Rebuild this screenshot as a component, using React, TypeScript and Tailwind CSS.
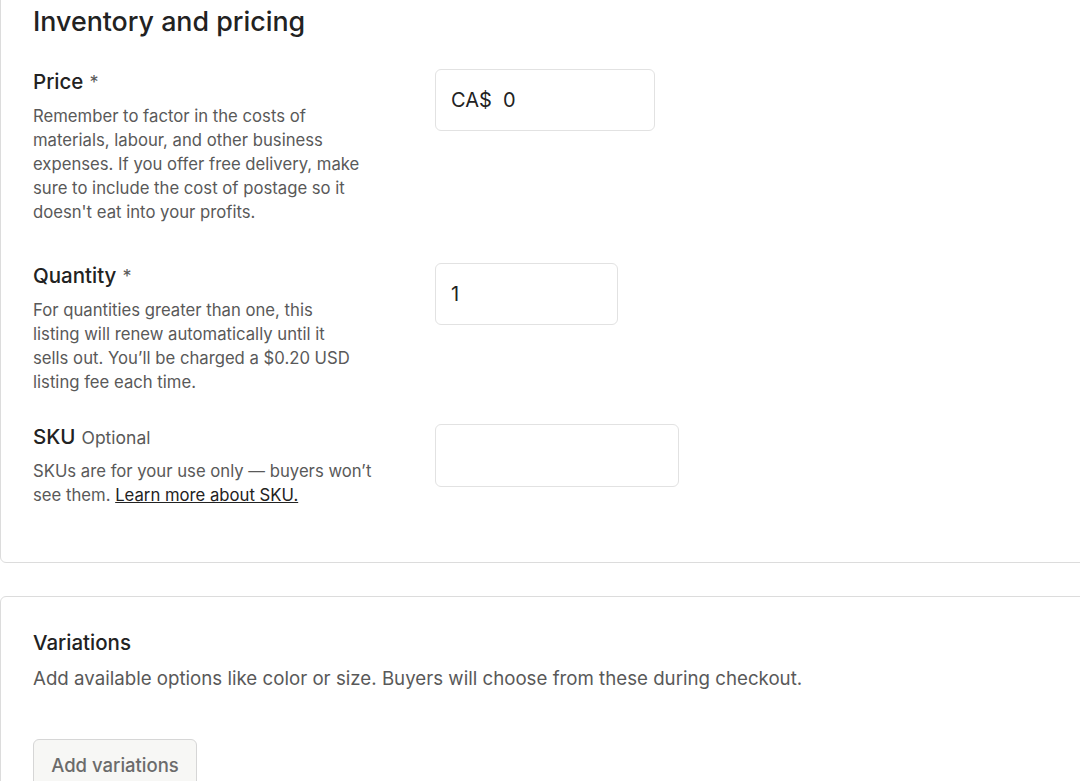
import React from 'react';

const font = { fontFamily: "Inter, 'Noto Sans', 'Liberation Sans', sans-serif" };

function Field({
  label,
  extra,
  lines,
  input,
  className,
}: {
  label: string;
  extra?: React.ReactNode;
  lines: React.ReactNode[];
  input: React.ReactNode;
  className?: string;
}) {
  return (
    <div className={`flex ${className ?? ''}`}>
      <div className="w-[402px] shrink-0">
        <div className="flex items-baseline gap-[6px] text-[20.5px] leading-[28px] font-medium text-[#222]">
          {label}
          {extra}
        </div>
        <p className="mt-[7px] text-[16.7px] leading-[24px] text-[#595959]">
          {lines.map((l, i) => (
            <span key={i} className="block whitespace-nowrap">
              {l}
            </span>
          ))}
        </p>
      </div>
      {input}
    </div>
  );
}

export default function App() {
  return (
    <div className="h-[781px] w-[1080px] overflow-hidden bg-white" style={font}>
      {/* Inventory card */}
      <div className="-mt-[12px] w-[1100px] rounded-md border border-[#dcdcdc] pb-[55px] pl-[32px] pt-[16px]">
        <h2 className="text-[26.8px] leading-[32px] font-medium text-[#222]">Inventory and pricing</h2>

        <Field
          className="mt-[31px]"
          label="Price"
          extra={<span className="font-normal text-[#595959] text-[18px]">*</span>}
          input={
            <div className="mt-[1px] flex h-[62px] w-[220px] items-center rounded-md border border-[#e2e2e2] px-[15px] text-[20px] text-[#222]">
              CA$&nbsp;&nbsp;0
            </div>
          }
          lines={[
            'Remember to factor in the costs of',
            'materials, labour, and other business',
            'expenses. If you offer free delivery, make',
            'sure to include the cost of postage so it',
            "doesn't eat into your profits.",
          ]}
        />

        <Field
          className="mt-[38px]"
          label="Quantity"
          extra={<span className="font-normal text-[#595959] text-[18px]">*</span>}
          input={
            <div className="mt-[1px] flex h-[62px] w-[183px] items-center rounded-md border border-[#e2e2e2] px-[15px] text-[20px] text-[#222]">
              1
            </div>
          }
          lines={[
            'For quantities greater than one, this',
            'listing will renew automatically until it',
            'sells out. You’ll be charged a $0.20 USD',
            'listing fee each time.',
          ]}
        />

        <Field
          className="mt-[29px]"
          label="SKU"
          extra={<span className="font-normal text-[#595959] text-[17.5px]">Optional</span>}
          input={<div className="mt-[1px] h-[63px] w-[244px] rounded-md border border-[#e2e2e2]" />}
          lines={[
            'SKUs are for your use only — buyers won’t',
            <>
              see them.{' '}
              <a href="#" className="text-[#222] underline">
                Learn more about SKU.
              </a>
            </>,
          ]}
        />
      </div>

      {/* Variations card */}
      <div className="mt-[33px] w-[1100px] rounded-md border border-[#dcdcdc] pl-[32px] pt-[32px]">
        <h3 className="text-[20.5px] leading-[28px] font-medium text-[#222]">Variations</h3>
        <p className="mt-[9px] text-[18.7px] leading-[26px] text-[#595959]">
          Add available options like color or size. Buyers will choose from these during checkout.
        </p>
        <button className="mt-[47px] h-[60px] w-[164px] rounded-md border border-[#d6d6d6] bg-[#f7f7f5] pb-[14px] pt-[8px] text-[18.5px] font-medium text-[#6b6b6b]">
          Add variations
        </button>
      </div>
    </div>
  );
}
